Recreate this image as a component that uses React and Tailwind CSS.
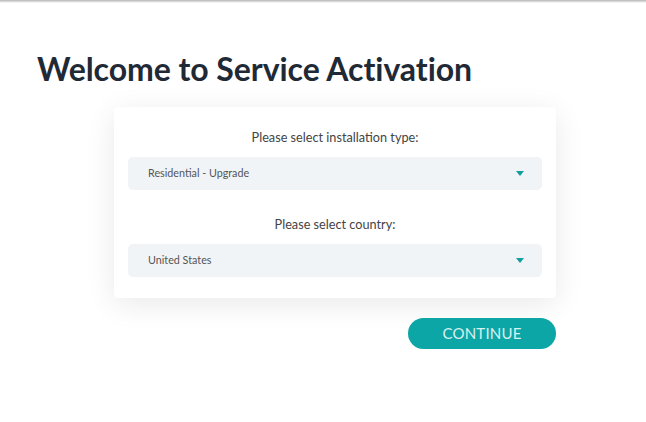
export default function App() {
  return (
    <div className="min-h-[422px] w-full bg-white font-['Lato',sans-serif]">
      <div className="h-[3px] bg-gradient-to-b from-[#b5b5b5] to-white" />
      <div className="pl-[37px] pr-[90px]">
        <h1 className="mt-[46px] text-[32px] font-bold leading-[40px] tracking-[-0.05px] text-[#1f2a36]">
          Welcome to Service Activation
        </h1>
        <div className="ml-[77px] w-[442px]">
          <div className="mt-[18px] rounded-[4px] bg-white px-[14px] pb-[21px] pt-[21px] shadow-[0_6px_30px_rgba(0,0,0,0.09)]">
            <p className="text-center text-[12.7px] leading-[18px] text-[#444]">
              Please select installation type:
            </p>
            <Select value="Residential - Upgrade" className="mt-[11px]" />
            <p className="mt-[25px] text-center text-[12.7px] leading-[18px] text-[#444]">
              Please select country:
            </p>
            <Select value="United States" className="mt-[11px]" />
          </div>
          <div className="mt-[20px] flex justify-end">
            <button className="h-[31px] w-[148px] rounded-full bg-[#0ca6a6] text-[15px] font-normal tracking-[0.2px] text-[#d8f1f1]">
              CONTINUE
            </button>
          </div>
        </div>
      </div>
    </div>
  );
}

function Select({ value, className }) {
  return (
    <div
      className={`flex h-[33px] items-center justify-between rounded-[5px] bg-[#f1f4f7] pl-[20px] pr-[18px] ${className}`}
    >
      <span className="text-[10.75px] text-[#555]">{value}</span>
      <svg width="8" height="5" viewBox="0 0 8 5" className="fill-[#129e9e]">
        <path d="M0 0h8L4 5z" />
      </svg>
    </div>
  );
}
